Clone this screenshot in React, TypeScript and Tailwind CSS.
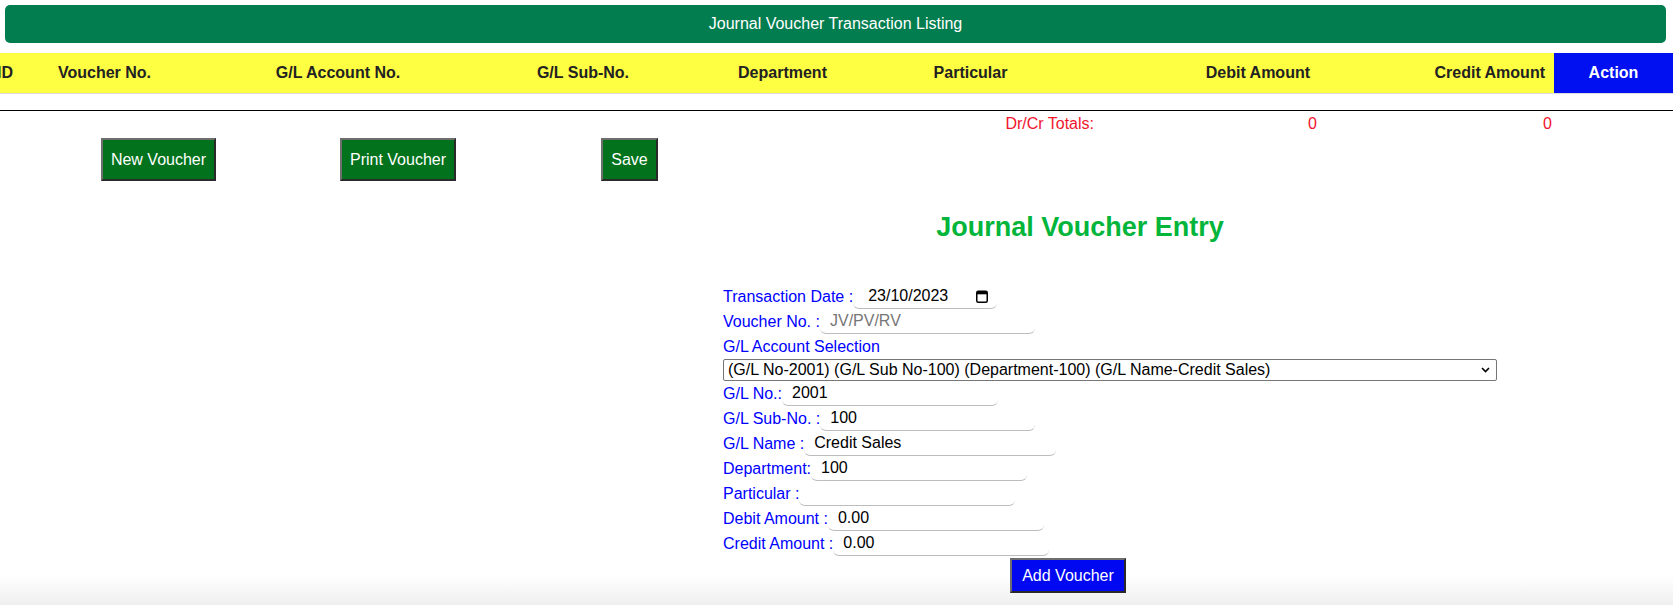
import React from "react";

const btnBorder =
  "border-2 border-t-[#6e6e6e] border-l-[#6e6e6e] border-r-[#2a2a2a] border-b-[#2a2a2a]";

function Field({
  label,
  value,
  width,
  placeholder,
}: {
  label: string;
  value?: string;
  width: string;
  placeholder?: string;
}) {
  return (
    <div className="flex h-[25px] items-center">
      <span className="whitespace-pre text-[#0000ff]">{label}</span>
      <input
        readOnly
        defaultValue={value}
        placeholder={placeholder}
        className={`${width} h-[25px] shrink-0 rounded-[6px] border-0 border-b border-[#bdbdbd] bg-transparent pl-[10px] text-black outline-none placeholder:text-[#767676]`}
      />
    </div>
  );
}

export default function App() {
  return (
    <div className="min-h-[605px] w-full overflow-hidden bg-[linear-gradient(to_bottom,#ffffff_0px,#ffffff_575px,#efefef_605px)] font-['Liberation_Sans',Arial,sans-serif] text-[16px] text-black">
      {/* Title bar */}
      <div className="mt-[5px] ml-[5px] mr-[7px] flex h-[38px] items-center justify-center rounded-[5px] bg-[#027d4f] text-white">
        Journal Voucher Transaction Listing
      </div>

      {/* Table header */}
      <div className="mt-[10px] ml-[-41px] flex h-[41px] border-b border-[#dcdcdc] font-bold text-[#222]">
        <div className="flex w-[92px] shrink-0 items-center justify-center bg-[#fefe43]">ID</div>
        <div className="flex w-[107px] shrink-0 items-center justify-center bg-[#fefe43]">Voucher No.</div>
        <div className="flex w-[360px] shrink-0 items-center justify-center bg-[#fefe43]">G/L Account No.</div>
        <div className="flex w-[130px] shrink-0 items-center justify-center bg-[#fefe43]">G/L Sub-No.</div>
        <div className="flex w-[269px] shrink-0 items-center justify-center bg-[#fefe43]">Department</div>
        <div className="flex w-[107px] shrink-0 items-center justify-center bg-[#fefe43]">Particular</div>
        <div className="flex w-[295px] shrink-0 items-center justify-end bg-[#fefe43] pr-[9px]">Debit Amount</div>
        <div className="flex w-[235px] shrink-0 items-center justify-end bg-[#fefe43] pr-[9px]">Credit Amount</div>
        <div className="flex w-[119px] shrink-0 items-center justify-center bg-[#0010f0] text-white">Action</div>
      </div>

      <div className="mt-[16px] h-px w-full bg-black" />

      {/* Totals */}
      <div className="mt-[4px] flex leading-[18px] text-[#f0142d]">
        <div className="w-[1094px] shrink-0 text-right">Dr/Cr Totals:</div>
        <div className="w-[223px] shrink-0 text-right">0</div>
        <div className="w-[235px] shrink-0 text-right">0</div>
      </div>

      {/* Buttons */}
      <div className="mt-[5px] flex">
        <button className={`ml-[101px] h-[43px] w-[115px] bg-[#02721c] text-white ${btnBorder}`}>New Voucher</button>
        <button className={`ml-[124px] h-[43px] w-[116px] bg-[#02721c] text-white ${btnBorder}`}>Print Voucher</button>
        <button className={`ml-[145px] h-[43px] w-[57px] bg-[#02721c] text-white ${btnBorder}`}>Save</button>
      </div>

      {/* Entry heading */}
      <h2 className="mt-[31px] ml-[723px] w-[714px] text-center text-[27px] leading-[31px] font-bold text-[#03b53b]">
        Journal Voucher Entry
      </h2>

      {/* Form */}
      <div className="mt-[41px] ml-[723px] flex flex-col">
        <div className="flex h-[25px] items-center">
          <span className="whitespace-pre text-[#0000ff]">Transaction Date :</span>
          <div className="flex h-[25px] w-[144px] shrink-0 items-center rounded-[6px] border-b border-[#bdbdbd] pl-[15px]">
            <span>23/10/2023</span>
            <svg className="ml-[28px]" width="12" height="13" viewBox="0 0 12 13">
              <rect x="0.75" y="1.25" width="10.5" height="11" rx="1.5" fill="none" stroke="#000" strokeWidth="1.5" />
              <rect x="1" y="1.5" width="10" height="2.8" fill="#000" />
            </svg>
          </div>
        </div>
        <Field label="Voucher No. :" width="w-[215px]" placeholder="JV/PV/RV" />
        <div className="flex h-[25px] items-center text-[#0000ff]">G/L Account Selection</div>
        <div className="flex h-[22px] w-[774px] items-center justify-between rounded-[2px] border border-[#767676] pl-[4px] pr-[6px]">
          <span>(G/L No-2001) (G/L Sub No-100) (Department-100) (G/L Name-Credit Sales)</span>
          <svg width="9" height="6" viewBox="0 0 9 6">
            <path d="M1 1 L4.5 4.5 L8 1" fill="none" stroke="#000" strokeWidth="1.6" />
          </svg>
        </div>
        <Field label="G/L No.:" value="2001" width="w-[216px]" />
        <Field label="G/L Sub-No. :" value="100" width="w-[215px]" />
        <Field label="G/L Name :" value="Credit Sales" width="w-[252px]" />
        <Field label="Department:" value="100" width="w-[216px]" />
        <Field label="Particular :" value="" width="w-[216px]" />
        <Field label="Debit Amount :" value="0.00" width="w-[216px]" />
        <Field label="Credit Amount :" value="0.00" width="w-[216px]" />
        <div className="mt-[2px] flex">
          <button className={`ml-[287px] h-[35px] w-[116px] bg-[#0008f2] text-white ${btnBorder}`}>Add Voucher</button>
        </div>
      </div>
    </div>
  );
}
